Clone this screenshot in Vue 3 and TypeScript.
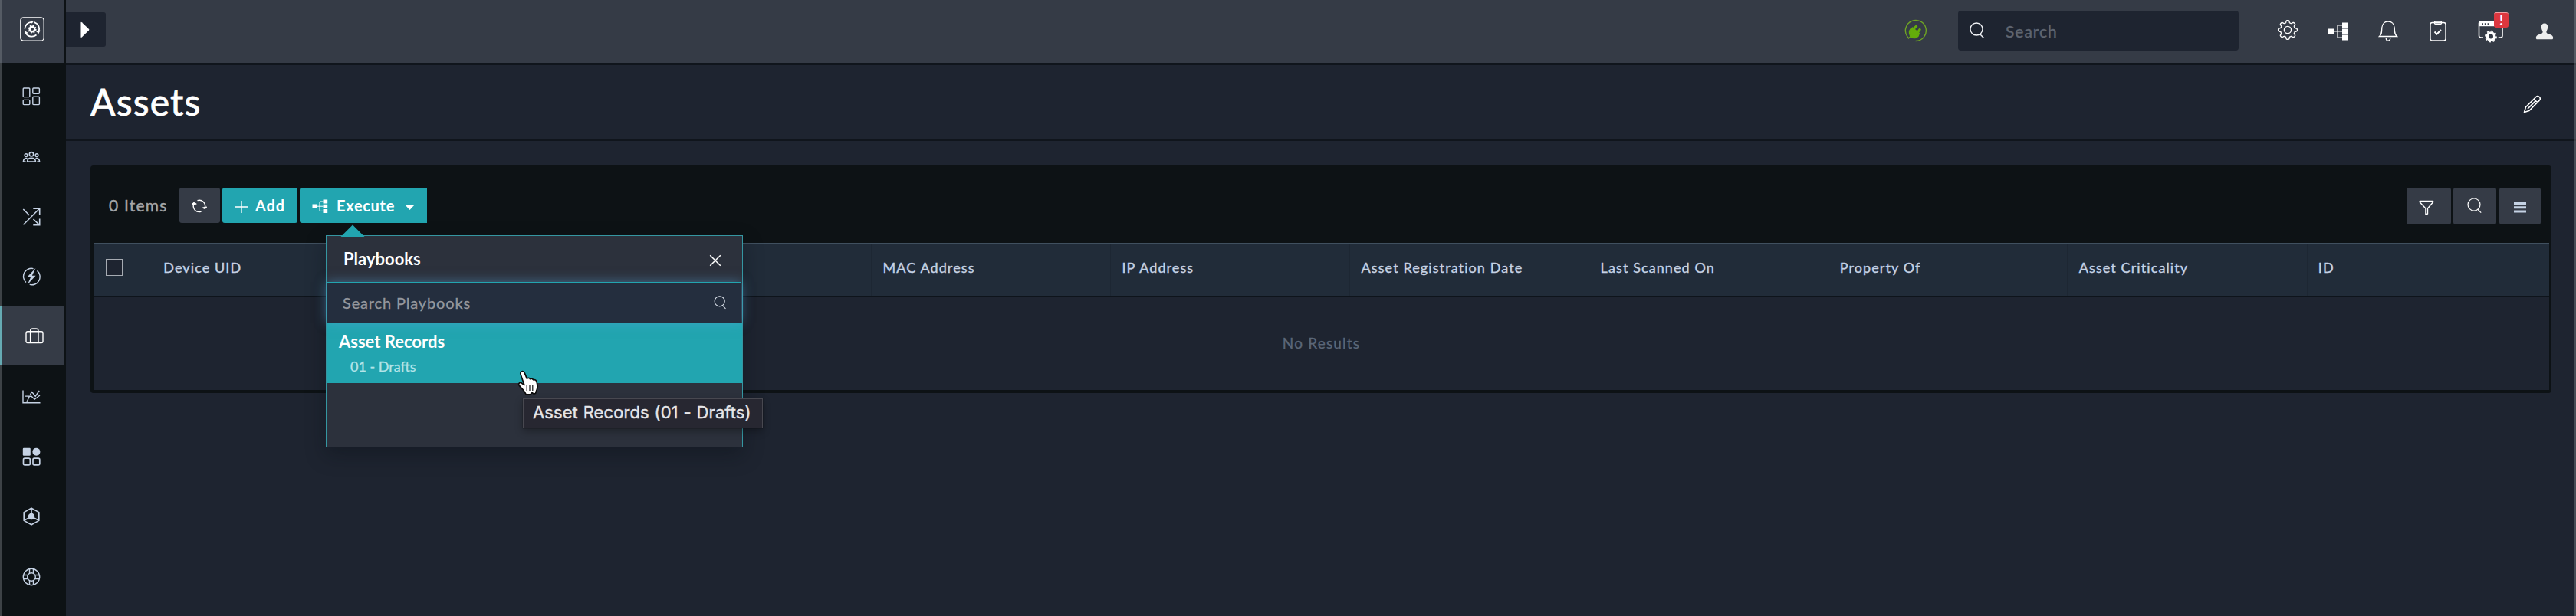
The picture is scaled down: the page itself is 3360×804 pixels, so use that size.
<script setup lang="ts">
const columns: string[] = [
  'Device UID', '', '', 'MAC Address', 'IP Address', 'Asset Registration Date',
  'Last Scanned On', 'Property Of', 'Asset Criticality', 'ID',
]
const navItems: string[] = [
  'dashboard', 'people', 'shuffle', 'bolt', 'assets', 'chart', 'apps', 'cube', 'help',
]
const activeItem = 'assets'

// Outline of an eight-toothed gear with softly rounded teeth.
function gearOutline(c: number, mid: number, depth: number): string {
  const pts: string[] = []
  for (let i = 0; i < 240; i++) {
    const a = (i / 240) * Math.PI * 2
    const r = mid + depth * Math.tanh(2.2 * Math.cos(8 * a))
    pts.push(`${(c + r * Math.sin(a)).toFixed(2)} ${(c - r * Math.cos(a)).toFixed(2)}`)
  }
  return `M${pts.join('L')}Z`
}
const settingsGear = gearOutline(14, 10.9, 1.5)
</script>

<template>
  <div class="app">
    <aside class="sidebar">
      <div class="logo">
        <svg width="32" height="32" viewBox="0 0 32 32" fill="none" stroke="#fff">
          <rect x="0.8" y="0.8" width="30.4" height="30.4" rx="4" stroke-width="1.3" />
          <g stroke-width="1.8">
            <path d="M6.4 15.5a9.3 9.3 0 0 1 8.1-8.7" />
            <path d="M18.8 7.2a9.3 9.3 0 0 1 5.9 12" />
            <path d="M21.5 23.5a9.3 9.3 0 0 1-13.3-1.4" />
          </g>
          <path d="M14 4l3.6 2.8-3.6 2.8zM26.4 17.5l-1.8 4.5-3.6-3zM6 23.5l.7-5 4.2 2.5z" fill="#fff" stroke="none" />
          <circle cx="16" cy="16" r="3.3" stroke-width="2.4" />
          <circle cx="16" cy="16" r="4.8" stroke-width="1.6" stroke-dasharray="1.9 1.87" />
        </svg>
      </div>
      <nav class="nav">
        <a v-for="item in navItems" :key="item" class="nav-item" :class="{ active: item === activeItem }">
          <svg width="24" height="24" viewBox="0 0 24 24" fill="none" stroke="#c5d2e4" stroke-width="1.4">
            <g v-if="item === 'dashboard'">
              <rect x="1.2" y="1" width="8.6" height="11.6" rx="1" />
              <rect x="13.8" y="1" width="8.6" height="7.2" rx="1" />
              <rect x="1.2" y="16.4" width="8.6" height="6.2" rx="1" />
              <rect x="13.8" y="12.2" width="8.6" height="10.4" rx="1" />
            </g>
            <g v-else-if="item === 'people'" stroke-width="1.6">
              <circle cx="12" cy="8.3" r="2.7" />
              <circle cx="5" cy="9.6" r="1.8" />
              <circle cx="19" cy="9.6" r="1.8" />
              <path d="M6.6 18c0-3.4 2-4.8 5.4-4.8s5.4 1.4 5.4 4.8zM6.5 13.8c-3-.6-4.9 1-5.1 4.2h3.2M17.5 13.8c3-.6 4.9 1 5.1 4.2h-3.2" />
            </g>
            <g v-else-if="item === 'shuffle'" stroke-width="1.6">
              <path d="M1.5 22.3L22.3 1.5M14.3 1.2h8.4v8.2M1.3 2l8 8M14.5 15l8 7.7M14.3 22.8h8.4v-8.2" />
            </g>
            <g v-else-if="item === 'bolt'">
              <path d="M14.5 1.6A10.5 10.5 0 0 0 5 19.6M19.5 4.4a10.5 10.5 0 0 1-9.8 18" />
              <path d="M17.5 1L6.5 12.6h4.7L6.8 22.6 17.6 10.8h-4.8z" fill="#c5d2e4" stroke="none" />
            </g>
            <g v-else-if="item === 'assets'" stroke="#fff">
              <rect x="1" y="5.8" width="22" height="14.8" rx="2" />
              <path d="M6.6 20.6V5a3 3 0 0 1 3-3h4.4a3 3 0 0 1 3 3v15.6" />
            </g>
            <g v-else-if="item === 'chart'">
              <path d="M1 3.6v16.2h22.5M6 18.8l3.4-7.7H4M9 11.2h3l4.2 4L23 10M10.4 8.8l2.3-3.2 4.5 5.6 5-7.4" />
            </g>
            <g v-else-if="item === 'apps'" stroke-width="1.7">
              <rect x=".8" y=".8" width="10" height="10" rx="1.2" fill="#c5d2e4" stroke="none" />
              <circle cx="18.4" cy="5.8" r="5" fill="#c5d2e4" stroke="none" />
              <rect x="1.5" y="14.2" width="8.8" height="8.6" rx="1.8" />
              <rect x="14" y="14.2" width="8.8" height="8.6" rx="1.8" />
            </g>
            <g v-else-if="item === 'cube'" stroke-width="1.6">
              <path d="M12 1.2l9.8 5.4v10.8L12 22.8l-9.8-5.4V6.6zM12 1.2V9M2.2 17.4L9 13.7M21.8 17.4L15 13.7" />
              <circle cx="12" cy="12" r="4.2" fill="#c5d2e4" stroke="none" />
            </g>
            <g v-else>
              <circle cx="12" cy="12" r="10.7" />
              <circle cx="12" cy="12" r="5.3" />
              <path d="M9.5 2v5.2M14.5 2v5.2M9.5 16.8V22M14.5 16.8V22M2 9.5h5.2M2 14.5h5.2M16.8 9.5H22M16.8 14.5H22" />
            </g>
          </svg>
        </a>
      </nav>
    </aside>

    <div class="main">
      <header class="topbar">
        <button class="toggle"><svg width="12" height="22" viewBox="0 0 12 22"><path d="M.5 1.8Q.5.2 1.8 1.3L11 10a1.2 1.2 0 0 1 0 1.6L1.8 20.5Q.5 21.5.5 20z" fill="#fff" /></svg></button>
        <div class="topbar-right">
          <svg class="plug" width="30" height="30" viewBox="0 0 30 30" fill="none" stroke="#6fa424" stroke-width="1.4">
            <path d="M14.7 28.5A13.5 13.5 0 1 0 4 23l1.5 2 3-3" />
            <path d="M11 13.5l4.6-4.2M16.5 18.5l3.6-5" stroke="#64ad0a" stroke-width="3.2" stroke-linecap="round" />
            <path d="M8 13l2.6-2 8.7 7.5-1.2 3.5a6.5 6.5 0 0 1-10.6-.5Q5.2 17 8 13z" fill="#64ad0a" stroke="#64ad0a" stroke-linejoin="round" />
          </svg>
          <div class="search">
            <svg width="20" height="22" viewBox="0 0 20 22" fill="none" stroke="#f2f4f7" stroke-width="1.4"><circle cx="9" cy="9" r="8" /><path d="M13.5 15.5l5 5" /></svg>
            <span>Search</span>
          </div>
          <div class="actions">
            <svg class="i1" width="28" height="28" viewBox="0 0 28 28" fill="none" stroke="#fff" stroke-width="1.4">
              <path :d="settingsGear" />
              <circle cx="14" cy="14" r="4.6" />
            </svg>
            <svg class="i2" width="28" height="24" viewBox="0 0 28 24"><path d="M1 8.5h7v7H1zM19 .5h8v7h-8zM19 8.5h8v7h-8zM19 16.5h8v7h-8z" fill="#fff" /><path d="M8 12h11M19 4h-6v16h6" fill="none" stroke="#fff" stroke-width="1.2" /></svg>
            <svg class="i3" width="26" height="27" viewBox="0 0 26 27" fill="none" stroke="#fff" stroke-width="1.3"><path d="M1.5 20.5c3.5-3 3-6 3.3-11.5C5.2 4 8.5 1 13 1s7.8 3 8.2 8c.3 5.5-.2 8.5 3.3 11.5zM10.2 22.5c0 4.7 5.6 4.7 5.6 0" /></svg>
            <svg class="i4" width="22" height="27" viewBox="0 0 22 27" fill="none" stroke="#fff" stroke-width="1.4"><rect x="1" y="2.5" width="20" height="23.5" rx="2.5" /><rect x="6.5" y="1" width="9" height="3.3" rx="1" /><path d="M6.5 14.5l3 3 5.5-5.5" stroke-width="2" /></svg>
            <div class="i5">
              <svg width="34" height="29" viewBox="0 0 34 29" fill="none" stroke="#fff">
                <path d="M7 22H4a2.5 2.5 0 0 1-2.5-2.5V3.5A2.5 2.5 0 0 1 4 1h25.5A2.5 2.5 0 0 1 32 3.5v16a2.5 2.5 0 0 1-2.5 2.5h-2.8" stroke-width="1.6" />
                <path d="M1.5 1h30.5v6.2H1.5z" fill="#fff" stroke="none" />
                <path d="M5 4.2h2M8.8 4.2h2M12.6 4.2h2" stroke="#353b47" stroke-width="1.8" />
                <circle cx="17" cy="20.6" r="4.7" stroke-width="3.4" />
                <circle cx="17" cy="20.6" r="7" stroke-width="1.8" stroke-dasharray="2.8 2.698" />
              </svg>
              <span class="alert">!</span>
            </div>
            <svg class="i6" width="24" height="22" viewBox="0 0 24 22"><path d="M12 .5c3 0 4.4 2 4.2 5-.2 2.8-1.2 4.3-1.7 5.6-.4 1.4.3 2.4 1.7 2.9 4.4 1.5 7 2.3 7 5.5 0 1.2-.6 1.8-1.6 1.8H2.4c-1 0-1.6-.6-1.6-1.8 0-3.2 2.6-4 7-5.5 1.4-.5 2.1-1.5 1.7-2.9-.5-1.3-1.5-2.8-1.7-5.6C7.600 2.5 9 .5 12 .5z" fill="#eee" /></svg>
          </div>
        </div>
      </header>

      <div class="titlebar">
        <h1>Assets</h1>
        <svg width="24" height="24" viewBox="0 0 24 24" fill="none" stroke="#fff" stroke-width="1.6" stroke-linejoin="round"><path d="M1.5 22.5l2-6.7L16.8 2.5q2.2-2 4.4 0t0 4.6L8 20.5zM15 4.5c0 2.8 1.8 4.6 4.5 4.6M17 7L6 18" /></svg>
      </div>

      <section class="panel">
        <div class="toolbar">
          <span class="count">0 Items</span>
          <button class="btn gray refresh"><svg width="20" height="18" viewBox="0 0 20 18" fill="none" stroke="#fff" stroke-width="1.4"><path d="M7.5 1.7a7.5 7.5 0 0 1 9.8 9M12.5 16A7.5 7.5 0 0 1 2.7 6.5" /><path d="M.8 6.6l2.2-2 2.8 1.5zM19.3 10.3l-2 2-2.8-1.2z" fill="#fff" stroke-linejoin="round" /></svg></button>
          <button class="btn teal add"><svg width="18" height="18" viewBox="0 0 18 18" stroke="#fff" stroke-width="1.3"><path d="M9 1v16M1 9h16" /></svg><span>Add</span></button>
          <div class="execute-wrap">
            <button class="btn teal execute">
              <svg width="21" height="18" viewBox="0 0 21 18"><path d="M.5 6.5H6v5.2H.5zM14.5.5h5.7v5h-5.7zM14.5 6.7h5.7v5h-5.7zM14.5 12.9h5.7v5h-5.7z" fill="#fff" /><path d="M6 9.2h8.5M14.5 3H10v12.4h4.5" fill="none" stroke="#fff" /></svg>
              <span>Execute</span>
              <svg class="caret" width="13" height="7" viewBox="0 0 13 7"><path d="M0 0h13L6.5 7z" fill="#fff" /></svg>
            </button>
            <div class="popup">
              <svg class="arrow" width="32" height="16" viewBox="0 0 32 16"><path d="M16 .5L31.5 16H.5z" fill="#22a5b0" /></svg>
              <div class="popup-head">
                <span>Playbooks</span>
                <svg width="16" height="16" viewBox="0 0 16 16" stroke="#fff" stroke-width="1.5"><path d="M1.2 1.2l13.6 13.6M14.8 1.2L1.2 14.8" /></svg>
              </div>
              <div class="popup-search">
                <span>Search Playbooks</span>
                <svg width="17" height="18" viewBox="0 0 20 22" fill="none" stroke="#dfe5ee" stroke-width="1.3"><circle cx="9" cy="9" r="8" /><path d="M13.5 15.5l5 5" /></svg>
              </div>
              <div class="popup-item">
                <div class="name">Asset Records</div>
                <div class="folder">01 - Drafts</div>
              </div>
              <svg class="cursor" width="32" height="34" viewBox="0 0 32 34"><path d="M8.3 2c1.8-.8 3.4.1 4 1.9l3 7.2c1.4-1.2 3.3-.9 4.2.6 1.6-1 3.4-.4 4.2 1.1 2-.7 3.9.4 4.3 2.6l1.2 5.4c.6 3.5-2 5.5-2.7 9.7l-2.3.6-2.2-1.6-2.3 2.3h-5.5c-2.2-5-5.7-7.8-8.8-11.4-1.6-2-.3-4.5 2.2-3.9l4.3 3L7 5.2C6.600 3.7 7 2.5 8.3 2z" fill="#fff" stroke="#0c0c0c" stroke-width="1.7" stroke-linejoin="round" /><path d="M15.2 19.5v7.5M19 19.5v7.5M22.8 19.5v7.5" stroke="#111" stroke-width="1.2" /></svg>
              <div class="tooltip">Asset Records (01 - Drafts)</div>
            </div>
          </div>
          <div class="toolbar-right">
            <button class="btn gray r1"><svg width="20" height="20" viewBox="0 0 20 20" fill="none" stroke="#fff" stroke-width="1.4" stroke-linejoin="round"><path d="M1.2 1.5h17.4v1.2L11.5 11v7l-2.6 1v-8L1.2 2.7z" /></svg></button>
            <button class="btn gray r2"><svg width="20" height="22" viewBox="0 0 20 22" fill="none" stroke="#fff" stroke-width="1.2"><circle cx="9" cy="9" r="8" /><path d="M13.5 15l4.7 4.7" /></svg></button>
            <button class="btn gray r3"><svg width="16" height="14" viewBox="0 0 16 14"><path d="M0 0h16v3H0zM0 5.3h16v3H0zM0 10.6h16v3H0z" fill="#c5d2e4" /></svg></button>
          </div>
        </div>
        <div class="grid">
          <div class="grid-head">
            <div class="check"><span class="checkbox"></span></div>
            <div v-for="(c, i) in columns" :key="i" class="col">{{ c }}</div>
          </div>
          <div class="grid-body"><span>No Results</span></div>
        </div>
      </section>
    </div>
  </div>
</template>

<style>
body {
  margin: 0;
  background: #1e2430;
}
</style>

<style scoped>
* {
  box-sizing: border-box;
}
svg {
  display: block;
  flex: none;
}
button {
  border: 0;
  padding: 0;
  font: inherit;
}
.app {
  position: relative;
  display: flex;
  width: 3360px;
  height: 804px;
  overflow: hidden;
  background: #1e2430;
  color: #fff;
  font-family: Lato, "Liberation Sans", sans-serif;
  white-space: nowrap;
}
.app::before,
.app::after {
  content: "";
  position: absolute;
  z-index: 5;
  top: 0;
  bottom: 0;
  width: 2px;
  background: rgba(140, 145, 150, 0.38);
}
.app::before {
  left: 0;
}
.app::after {
  right: 0;
}
.sidebar {
  width: 86px;
  flex: none;
  background: #0d1215;
  padding-right: 3px;
}
.logo {
  height: 82px;
  background: #353b46;
  display: flex;
  justify-content: center;
  padding-top: 22px;
}
.nav {
  display: grid;
  grid-auto-rows: 77px;
  row-gap: 1.3px;
  padding-top: 4.8px;
}
.nav-item {
  display: flex;
  align-items: center;
  justify-content: center;
  padding-right: 1px;
  padding-top: 2px;
}
.nav-item.active {
  background: #353b46;
  border-left: 3px solid #4fbcc5;
  padding-left: 3px;
  padding-right: 0;
}
.main {
  flex: 1;
  min-width: 0;
}
.topbar {
  height: 85px;
  background: #353b46;
  border-bottom: 3px solid #10151c;
  display: flex;
  justify-content: space-between;
}
.toggle {
  width: 52px;
  height: 45px;
  margin-top: 16px;
  padding-left: 19px;
  border-radius: 0 3px 3px 0;
  background: #1e2430;
  display: flex;
  align-items: center;
}
.topbar-right {
  display: flex;
}
.plug {
  margin: 25px 40px 0 0;
}
.search {
  width: 366px;
  height: 52px;
  margin-top: 14px;
  padding-left: 15px;
  border-radius: 4px;
  background: #1e2430;
  display: flex;
  align-items: center;
  gap: 27px;
  font-size: 21px;
  letter-spacing: 1px;
  color: #5f6570;
  -webkit-text-stroke: 0.4px #5f6570;
}
.actions {
  width: 440px;
  display: flex;
}
.i1 { margin: 25px 0 0 50px; }
.i2 { margin: 29px 0 0 38px; }
.i3 { margin: 27px 0 0 38px; }
.i4 { margin: 27px 0 0 41px; }
.i5 { margin: 27px 0 0 41px; position: relative; }
.i6 { margin: 30px 0 0 41px; }
.alert {
  position: absolute;
  left: 21px;
  top: -11px;
  width: 19px;
  height: 20px;
  border-radius: 3px;
  border-top: 1px solid #f0a0a4;
  background: #dc373f;
  font-size: 18px;
  font-weight: 700;
  line-height: 19px;
  text-align: center;
}
.titlebar {
  height: 99px;
  border-bottom: 3px solid #10151c;
  padding: 0 45px 0 32px;
  display: flex;
  align-items: center;
  justify-content: space-between;
}
.titlebar svg {
  margin-top: 5px;
}
h1 {
  margin: 0;
  font-size: 48px;
  line-height: 60px;
  font-weight: 400;
  letter-spacing: 1.2px;
  -webkit-text-stroke: 0.8px #fff;
}
.panel {
  width: 3210px;
  height: 297px;
  margin: 32px 0 0 32px;
  padding: 0 3px 4px 4px;
  border-radius: 4px;
  background: #0d1215;
}
.toolbar {
  height: 101px;
  padding: 29px 11px 0 20px;
  display: flex;
}
.count {
  width: 92px;
  line-height: 45px;
  font-size: 21px;
  letter-spacing: 1.2px;
  color: #a5a6a8;
  -webkit-text-stroke: 0.4px #a5a6a8;
}
.btn {
  height: 46px;
  border-radius: 3px;
  display: flex;
  align-items: center;
  justify-content: center;
  color: #fff;
  font-size: 20px;
  font-weight: 700;
  letter-spacing: 0.8px;
}
.gray { background: #353b46; }
.teal { background: #22a5b0; }
.refresh { width: 53px; margin-right: 3px; padding-top: 2px; padding-right: 2px; }
.add { width: 98px; margin-right: 3px; gap: 9px; }
.add svg { margin-top: 3px; }
.add span,
.execute span { margin-top: -1px; }
.execute-wrap { position: relative; width: 166px; }
.execute { width: 166px; border-radius: 3px 0 0 3px; justify-content: flex-start; padding-left: 15px; letter-spacing: 0.7px; }
.execute svg:first-child { margin: 2px 11px 0 1px; }
.execute .caret { margin-left: 13px; margin-top: 4px; }
.toolbar-right { margin-left: auto; display: flex; }
.toolbar-right .btn { height: 48px; }
.r1 { width: 58px; margin-right: 3px; padding-top: 3px; padding-right: 6px; }
.r2 { width: 56px; margin-right: 4px; }
.r3 { width: 54px; padding-top: 3px; }
.popup {
  position: absolute;
  z-index: 3;
  left: 34px;
  top: 62px;
  width: 544px;
  height: 277px;
  border: 1px solid #3597a2;
  background: #2c313c;
  box-shadow: 0 10px 24px rgba(10, 14, 20, 0.35);
}
.arrow {
  position: absolute;
  left: 18px;
  top: -15px;
}
.popup-head {
  height: 60px;
  padding: 0 27px 0 22px;
  display: flex;
  align-items: center;
  justify-content: space-between;
  font-size: 22px;
  font-weight: 700;
}
.popup-head span {
  margin-top: -1px;
}
.popup-head svg {
  margin-top: 4px;
}
.popup-search {
  position: relative;
  z-index: 1;
  width: 541px;
  height: 53px;
  padding: 0 18px 0 20px;
  border: 1px solid #22a5b0;
  border-bottom: 0;
  background: #242e3e;
  box-shadow: 0 0 14px rgba(90, 165, 220, 0.5);
  display: flex;
  align-items: center;
  justify-content: space-between;
  font-size: 20px;
  letter-spacing: 0.85px;
  color: #95989e;
  -webkit-text-stroke: 0.3px #95989e;
}
.popup-item {
  height: 79px;
  width: 542px;
  padding: 11px 0 0 16px;
  background: #22a5b0;
}
.name {
  font-size: 22px;
  line-height: 28px;
  font-weight: 700;
}
.folder {
  padding: 6.5px 0 0 15px;
  font-size: 18px;
  line-height: 22px;
  color: #b4e4e8;
  -webkit-text-stroke: 0.3px #b4e4e8;
}
.cursor {
  position: absolute;
  z-index: 4;
  left: 246px;
  top: 175px;
}
.tooltip {
  position: absolute;
  left: 256px;
  top: 212px;
  width: 313px;
  height: 39px;
  padding-left: 12px;
  border: 1px solid #484850;
  background: #272731;
  box-shadow: 0 0 1px #111, 0 4px 10px rgba(0, 0, 0, 0.3);
  font: 400 22px/34px Inter, Roboto, sans-serif;
  letter-spacing: 0.08px;
  word-spacing: 0.6px;
  color: #e6e6e8;
  -webkit-text-stroke: 0.4px #e6e6e8;
}
.grid-head {
  height: 70px;
  border-top: 1px solid #40505f;
  border-bottom: 1px solid #0e141b;
  background: #212c39;
  box-shadow: inset 0 1px #10161e;
  display: flex;
}
.check {
  width: 77px;
  padding: 20px 0 0 16px;
}
.checkbox {
  display: block;
  width: 22px;
  height: 22px;
  border: 1px solid #a6abb2;
  background: #1e2430;
}
.col {
  flex: none;
  width: 312.07px;
  padding: 0 0 0 14.3px;
  border-right: 1px solid #1d2733;
  font-size: 18px;
  line-height: 62px;
  letter-spacing: 1.1px;
  color: #c5d2e4;
  -webkit-text-stroke: 0.4px #c5d2e4;
}
.check + .col {
  width: 314px;
}
.col:last-child {
  width: 293px;
}
.grid-body {
  height: 122px;
  background: #1e2430;
  display: flex;
  align-items: center;
  justify-content: center;
  padding-bottom: 1px;
  font-size: 19px;
  letter-spacing: 1.2px;
  color: #5b6778;
  -webkit-text-stroke: 0.3px #5b6778;
}
</style>
